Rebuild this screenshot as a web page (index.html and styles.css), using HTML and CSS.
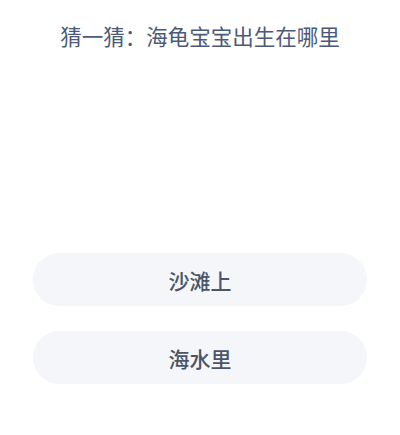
FILE: index.html
```html
<!DOCTYPE html>
<html lang="zh">
<head>
<meta charset="utf-8">
<link rel="stylesheet" href="styles.css">
</head>
<body>
<div class="page">
  <h1 class="question">猜一猜：海龟宝宝出生在哪里</h1>
  <div class="options">
    <div class="option">沙滩上</div>
    <div class="option">海水里</div>
  </div>
</div>
</body>
</html>
```
FILE: styles.css
```css
html, body {
  margin: 0;
  padding: 0;
  background: #ffffff;
}
.page {
  width: 400px;
  height: 435px;
  box-sizing: border-box;
  padding-top: 21px;
  font-family: "Noto Sans CJK SC", "Noto Sans", sans-serif;
}
.question {
  margin: 0;
  font-size: 21.5px;
  line-height: 30px;
  font-weight: 400;
  color: #4b5a78;
  text-align: center;
}
.options {
  margin-top: 202px;
  padding: 0 33px;
  display: flex;
  flex-direction: column;
  gap: 25px;
}
.option {
  height: 53px;
  border-radius: 27px;
  background: #f4f6f9;
  display: flex;
  align-items: center;
  justify-content: center;
  font-size: 21px;
  color: #4a5568;
  font-weight: 500;
}
```
